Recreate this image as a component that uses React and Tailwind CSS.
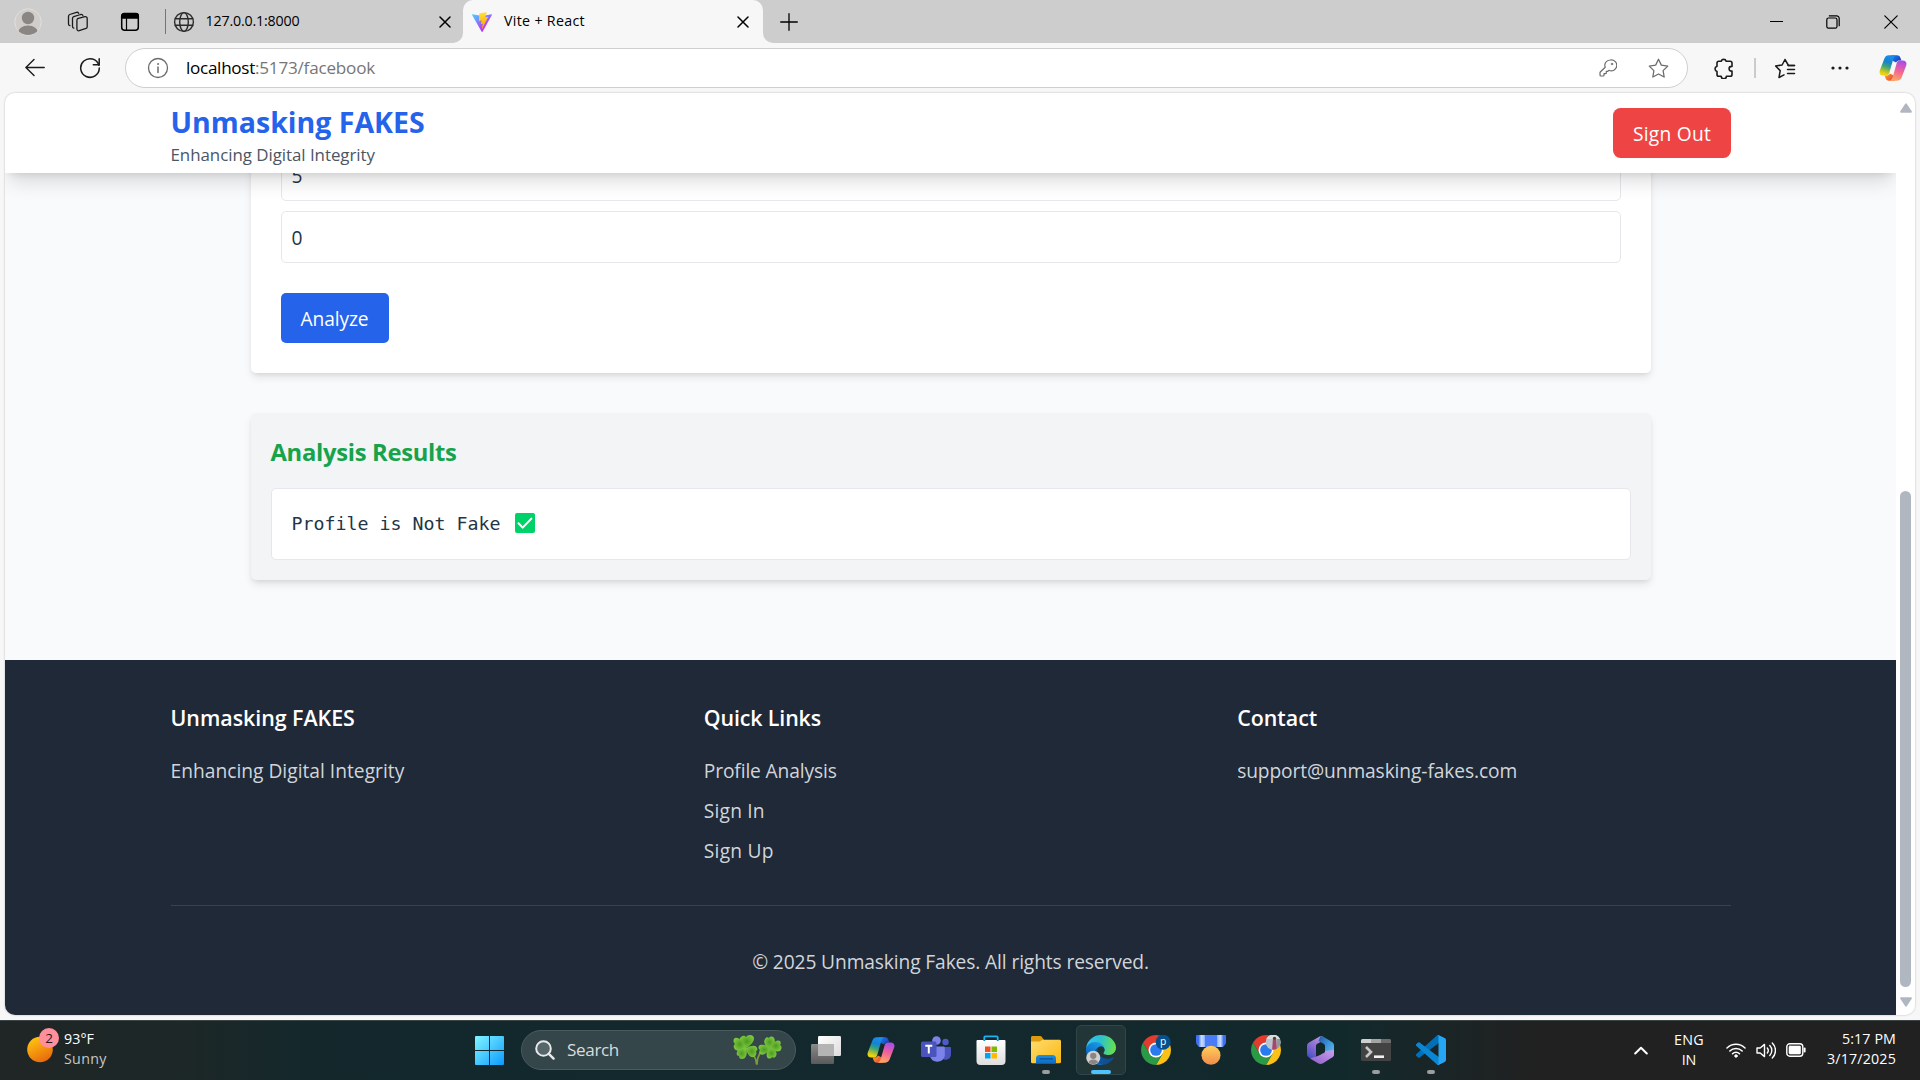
import React from "react";

function Icon({ size = 20, w, h, box = "0 0 20 20", sw = 1.2, className = "", children }) {
  return (
    <svg
      width={w || size}
      height={h || size}
      viewBox={box}
      fill="none"
      stroke="currentColor"
      strokeWidth={sw}
      strokeLinecap="round"
      strokeLinejoin="round"
      className={"block shrink-0 " + className}
    >
      {children}
    </svg>
  );
}

/* ---------- browser icons ---------- */

const ViteLogo = () => (
  <svg width="20" height="20" viewBox="0 0 256 257" className="block shrink-0">
    <defs>
      <linearGradient id="viteA" x1="-.8%" x2="57.6%" y1="7.7%" y2="78.4%">
        <stop offset="0%" stopColor="#41D1FF" />
        <stop offset="100%" stopColor="#BD34FE" />
      </linearGradient>
      <linearGradient id="viteB" x1="43.4%" x2="50.3%" y1="2.2%" y2="89%">
        <stop offset="0%" stopColor="#FFEA83" />
        <stop offset="8.3%" stopColor="#FFDD35" />
        <stop offset="100%" stopColor="#FFA800" />
      </linearGradient>
    </defs>
    <path fill="url(#viteA)" d="M255.153 37.938L134.897 252.976c-2.483 4.44-8.862 4.466-11.382.048L.875 37.958c-2.746-4.814 1.371-10.646 6.827-9.67l120.385 21.517a6.537 6.537 0 0 0 2.322-.004l117.867-21.483c5.438-.991 9.574 4.796 6.877 9.62Z" />
    <path fill="url(#viteB)" d="M185.432.063L96.44 17.501a3.268 3.268 0 0 0-2.634 3.014l-5.474 92.456a3.268 3.268 0 0 0 3.997 3.378l24.777-5.718c2.318-.535 4.413 1.507 3.936 3.838l-7.361 36.047c-.495 2.426 1.782 4.5 4.151 3.78l15.304-4.649c2.372-.72 4.652 1.36 4.15 3.788l-11.698 56.621c-.732 3.542 3.979 5.473 5.943 2.437l1.313-2.028l72.516-144.72c1.215-2.423-.88-5.186-3.54-4.672l-25.505 4.922c-2.396.462-4.435-1.77-3.759-4.114l16.646-57.705c.677-2.35-1.37-4.583-3.769-4.113Z" />
  </svg>
);

const Copilot = ({ id }) => (
  <svg width="28" height="26" viewBox="0 0 28 26" className="block shrink-0">
    <defs>
      <linearGradient id={id + "a"} x1="12" y1="0" x2="6" y2="19" gradientUnits="userSpaceOnUse">
        <stop offset="0" stopColor="#1B8FEF" />
        <stop offset=".38" stopColor="#1583D0" />
        <stop offset=".62" stopColor="#3CA477" />
        <stop offset="1" stopColor="#F2D30B" />
      </linearGradient>
      <linearGradient id={id + "b"} x1="22" y1="6" x2="15" y2="26" gradientUnits="userSpaceOnUse">
        <stop offset="0" stopColor="#A94DE8" />
        <stop offset=".45" stopColor="#F0609A" />
        <stop offset="1" stopColor="#FFAE5E" />
      </linearGradient>
      <linearGradient id={id + "c"} x1="14" y1="0" x2="21" y2="6" gradientUnits="userSpaceOnUse">
        <stop offset="0" stopColor="#1E7FE8" />
        <stop offset="1" stopColor="#1B3FC4" />
      </linearGradient>
      <linearGradient id={id + "d"} x1="6" y1="20" x2="13" y2="26" gradientUnits="userSpaceOnUse">
        <stop offset="0" stopColor="#F5A024" />
        <stop offset="1" stopColor="#F0453C" />
      </linearGradient>
    </defs>
    <path fill={`url(#${id}c)`} d="M12 .3h6c1.900 0 3 1 3.600 3l.8 2.200h-1.500c-1.900 0-3 .6-3.700 2L14 6z" />
    <path fill={`url(#${id}d)`} d="M16 25.700h-6c-1.900 0-3-1-3.600-3l-.8-2.200h1.500c1.900 0 3-.6 3.700-2L14 20z" />
    <path fill={`url(#${id}a)`} d="M17 .3H9.800C7.300.3 5.900 1.900 5 4.400L.9 15.200c-1.100 3.200.3 5.300 3.300 5.300h2.800c1.900 0 2.800-1.200 3.400-3.100L14 5c.7-2.300 1.200-3.700 3-4.700z" />
    <path fill={`url(#${id}b)`} d="M11 25.700h7.200c2.500 0 3.900-1.600 4.800-4.100l4.100-10.800c1.100-3.200-.3-5.300-3.300-5.300h-2.800c-1.900 0-2.800 1.200-3.400 3.100L14 21c-.7 2.300-1.200 3.700-3 4.700z" />
  </svg>
);

const CloseIcon = () => (
  <Icon size={12} box="0 0 12 12" sw={1.5}>
    <path d="M1 1l10 10M11 1L1 11" />
  </Icon>
);

function TabStrip() {
  return (
    <div className="flex h-[43px] bg-[#f7f7f7] text-black">
      <div className="flex w-[463px] items-center rounded-br-[10px] bg-[#cdcdcd] pl-3.5">
        <svg width="28" height="28" viewBox="0 0 28 28" className="block shrink-0">
          <clipPath id="avatarClip"><circle cx="14" cy="14" r="13" /></clipPath>
          <circle cx="14" cy="14" r="13.2" fill="#d0cdcb" stroke="#e0dfdb" strokeWidth="1" />
          <g fill="#8a8684" clipPath="url(#avatarClip)">
            <circle cx="14" cy="10" r="6.200" />
            <ellipse cx="14" cy="25.500" rx="10.300" ry="8" />
          </g>
        </svg>
        <Icon size={22} box="0 0 22 22" sw={1.3} className="ml-[25px] text-[#1b1b1b]">
          <path d="M10.500 7.700l7.400-2a1.800 1.800 0 0 1 2.300 1.700v8.300c0 .8-.4 1.400-1.200 1.700l-6.800 2.300a1.800 1.800 0 0 1-2.300-1.700V9.400c0-.8.200-1.400.6-1.700z" />
          <path d="M6.800 17.200c-.9-.2-1.300-.9-1.300-1.700V7.300c0-.8.400-1.400 1.200-1.700l7-2.100c1.100-.3 1.900.2 2.200 1.100" />
          <path d="M2.900 14.700c-.9-.2-1.400-.9-1.400-1.700V5.200c0-.8.400-1.400 1.200-1.700l6.800-2.100c1-.3 1.900.1 2.200 1" />
        </Icon>
        <Icon size={20} box="0 0 20 20" sw={1.5} className="ml-[31px]">
          <rect x="1.700" y="1.700" width="16.600" height="16.600" rx="3" />
          <path d="M1.700 5V4a2.500 2.500 0 0 1 2.500-2.500h11.600A2.500 2.500 0 0 1 18.300 4v2H1.700z" fill="currentColor" />
          <path d="M6.500 6.500v11.500" strokeWidth="1.200" />
        </Icon>
        <div className="ml-[24.500px] h-[25px] w-px bg-[#757575]" />
        <Icon size={22} box="0 0 22 22" sw={1.4} className="ml-[7px] text-[#2b2b2b]">
          <circle cx="11" cy="11" r="9.400" />
          <ellipse cx="11" cy="11" rx="4.300" ry="9.400" />
          <path d="M2.200 7.700h17.600M2.200 14.300h17.600" />
        </Icon>
        <span className="ml-[11px] w-[233px] pb-0.5 text-[14.250px] tracking-[-0.175px] whitespace-nowrap">127.0.0.1:8000</span>
        <CloseIcon />
      </div>
      <div className="w-[300px] bg-[#cdcdcd]">
        <div className="flex h-full items-center rounded-t-[10px] bg-[#f7f7f7] pl-[9px]">
          <ViteLogo />
          <span className="ml-3 w-[233px] pb-0.5 text-[14.250px] tracking-[0.300px] whitespace-nowrap">Vite + React</span>
          <CloseIcon />
        </div>
      </div>
      <div className="flex flex-1 items-center rounded-bl-[10px] bg-[#cdcdcd] pl-[17px]">
        <Icon size={18} box="0 0 18 18" sw={1.3}>
          <path d="M9 .7v16.600M.7 9h16.600" />
        </Icon>
        <div className="ml-auto flex items-center">
          <div className="h-px w-[13px] bg-black" />
          <Icon size={14} box="0 0 14 14" sw={1.2} className="ml-[43px]">
            <rect x=".8" y="3" width="10.200" height="10.200" rx="1.800" />
            <path d="M3.300.8h7.200a2.600 2.600 0 0 1 2.700 2.700v7.200" />
          </Icon>
          <Icon size={14} box="0 0 14 14" sw={1.200} className="mr-[22px] ml-[44px]">
            <path d="M.8.8l12.400 12.400M13.200.8L.8 13.200" />
          </Icon>
        </div>
      </div>
    </div>
  );
}

function Toolbar() {
  return (
    <div className="flex h-[50px] items-center bg-[#f7f7f7] text-[#1b1b1b]">
      <Icon size={20} sw={1.400} className="ml-[25px]">
        <path d="M9 1.500L.9 9.500 9 17.500M1.200 9.500h18" />
      </Icon>
      <Icon size={22} box="0 0 22 22" sw={1.500} className="ml-[34px]">
        <path d="M19.900 8.300A9.300 9.300 0 1 0 20.300 11" />
        <path d="M20.200 1.800v5.900h-5.900" />
      </Icon>
      <div className="ml-6 flex h-10 w-[1563px] items-center rounded-full border border-[#cfcfcf] bg-white pl-[21px]">
        <Icon size={22} box="0 0 22 22" sw={1.300} className="text-[#6b6b6b]">
          <circle cx="11" cy="11" r="9.500" />
          <path d="M11 10v5.500" strokeWidth="1.500" />
          <circle cx="11" cy="7" r=".6" fill="currentColor" strokeWidth=".7" />
        </Icon>
        <span className="ml-[17px] w-[1412.500px] text-[17.100px] leading-6 whitespace-nowrap text-black">
          <span className="tracking-[-0.290px]">localhost</span>
          <span className="tracking-[-0.208px] text-[#767676]">:5173/facebook</span>
        </span>
        <Icon size={18} box="0 0 18 18" sw={1.200} className="text-[#6b6b6b]">
          <path d="M11.200 1a5.300 5.300 0 0 0-5 7.200L1.300 13a1 1 0 0 0-.3.800V16c0 .6.400 1 1 1h2.200c.500 0 .8-.4.800-.8v-1.500h1.500c.5 0 .8-.3.800-.8v-1.500h1.500l1-1.100A5.500 5.500 0 1 0 11.200 1z" />
          <circle cx="13" cy="5" r=".9" fill="currentColor" strokeWidth=".4" />
        </Icon>
        <Icon size={21} box="0 0 20 20" sw={1.200} className="ml-[31px] text-[#6b6b6b]">
          <path d="M10 1.200l2.700 5.600 6.100.9-4.400 4.300 1 6.100L10 15.200l-5.400 2.900 1-6.100L1.200 7.700l6.100-.9z" />
        </Icon>
      </div>
      <Icon size={21} box="0 0 21 21" sw={1.600} className="ml-[26px]">
        <path d="M7.200 3.300a2.600 2.600 0 0 1 5 0h4a1.800 1.800 0 0 1 1.800 1.800v3.300h-.6a2.300 2.300 0 0 0 0 4.600h.6v3.500a1.800 1.800 0 0 1-1.800 1.800h-3.800a2.600 2.600 0 0 1-5.200 0H4.800A1.800 1.800 0 0 1 3 16.500v-3.100a2.700 2.700 0 0 1 0-5.200V5.100a1.800 1.800 0 0 1 1.800-1.800z" />
      </Icon>
      <div className="ml-[19px] h-5 w-[1.500px] bg-[#cbcbcb]" />
      <Icon w={22} h={21} box="0 0 22 21" sw={1.500} className="ml-[18px]">
        <path d="M20.500 7.500h-6L11 1.500 8.100 7 1.600 8l4.600 4.600L5 19.500l5-2.700" />
        <path d="M14 7.500h6.500M13.500 11.500h7M13.500 15.500h7" />
      </Icon>
      <svg width="18" height="4" viewBox="0 0 18 4" className="ml-[35px] block shrink-0" fill="currentColor">
        <circle cx="2" cy="2" r="1.600" /><circle cx="9" cy="2" r="1.600" /><circle cx="16" cy="2" r="1.600" />
      </svg>
      <div className="ml-[30px]"><Copilot id="cpTop" /></div>
    </div>
  );
}

/* ---------- web page ---------- */

function Header() {
  return (
    <header className="relative z-10 flex h-20 justify-center bg-white shadow-[0_12px_19px_-4px_rgba(0,0,0,0.14),0_5px_8px_-5px_rgba(0,0,0,0.12)]">
      <div className="flex w-[1560px] items-start justify-between">
        <div className="pt-[9px] whitespace-nowrap">
          <div className="text-[28.500px] leading-10 font-bold text-[#2563eb]">Unmasking FAKES</div>
          <div className="text-[16.900px] leading-[25px] tracking-[-0.040px] text-[#4b5563]">Enhancing Digital Integrity</div>
        </div>
        <div className="mt-[15px] flex h-[50px] w-[118px] items-center justify-center rounded-[7.500px] bg-[#ef4444] pt-0.5 pl-px text-[19.200px] tracking-[0.230px] text-white">Sign Out</div>
      </div>
    </header>
  );
}

function Field({ value }) {
  return (
    <div className="flex h-[52px] items-center rounded-[5px] border border-[#e5e7eb] bg-white pt-0.5 pl-2.5 text-[19.200px] leading-5 text-[#213547]">{value}</div>
  );
}

function Main() {
  return (
    <main className="flex flex-1 flex-col items-center overflow-hidden bg-[#f9fafc]">
      <section className="-mt-6 w-[1400px] shrink-0 rounded-[5px] bg-white px-[30px] pb-[30px] shadow-[0_5px_8px_-1px_rgba(0,0,0,0.1),0_2px_5px_-2px_rgba(0,0,0,0.1)]">
        <div className="flex flex-col gap-2.5">
          <Field value="5" />
          <Field value="0" />
        </div>
        <div className="mt-[30px] flex h-[50px] w-[108px] items-center justify-center rounded-[5px] bg-[#2563eb] pt-0.5 text-[19.200px] tracking-[-0.100px] text-white">Analyze</div>
      </section>
      <section className="mt-10 w-[1400px] shrink-0 rounded-[5px] bg-[#f3f4f6] px-5 pt-5 pb-5 shadow-[0_5px_8px_-1px_rgba(0,0,0,0.1),0_2px_5px_-2px_rgba(0,0,0,0.1)]">
        <h2 className="h-[55px] text-[23.750px] leading-[39px] font-bold tracking-[-0.289px] text-[#16a34a]">Analysis Results</h2>
        <div className="flex h-[72px] items-center rounded-[5px] border border-[#e5e7eb] bg-white pl-5">
          <span className="font-['DejaVu_Sans_Mono','Liberation_Mono',monospace] text-[18.270px] whitespace-pre text-[#213547]">Profile is Not Fake </span>
          <svg width="20" height="20" viewBox="0 0 20 20" className="mb-0.5 ml-[4px] block">
            <rect width="20" height="20" rx="2" fill="#00d26a" />
            <path d="M3.500 10.200l4.200 4.400 8.700-9" fill="none" stroke="#fff" strokeWidth="2" strokeLinecap="round" strokeLinejoin="round" />
          </svg>
        </div>
      </section>
    </main>
  );
}

function Footer() {
  const h = "text-[21.400px] leading-[35px] font-semibold text-white";
  return (
    <footer className="flex h-[355px] flex-col items-center bg-[#1f2937] pt-10 text-[19.200px] text-[#d1d5db]">
      <div className="grid h-[206px] w-[1560px] shrink-0 grid-cols-3 gap-10 border-b border-[#374151] whitespace-nowrap">
        <div>
          <div className={h + " tracking-[-0.036px]"}>Unmasking FAKES</div>
          <div className="mt-4 leading-10 tracking-[0.010px]">Enhancing Digital Integrity</div>
        </div>
        <div>
          <div className={h + " tracking-[-0.136px]"}>Quick Links</div>
          <div className="mt-4 leading-10 tracking-[-0.130px]">Profile Analysis</div>
          <div className="leading-10 tracking-[0.190px]">Sign In</div>
          <div className="leading-10 tracking-[0.240px]">Sign Up</div>
        </div>
        <div>
          <div className={h}>Contact</div>
          <div className="mt-4 leading-10 tracking-[-0.110px]">support@unmasking-fakes.com</div>
        </div>
      </div>
      <div className="mt-[41px] leading-[30px] tracking-[-0.120px]">© 2025 Unmasking Fakes. All rights reserved.</div>
    </footer>
  );
}

function Scrollbar() {
  return (
    <div className="flex w-[19px] flex-col items-center bg-white pt-2.5 pb-2">
      <svg width="12" height="10" viewBox="0 0 12 10"><path d="M6 1.200L11 8.800H1z" fill="#b1b7c0" stroke="#b1b7c0" strokeWidth="1.800" strokeLinejoin="round" /></svg>
      <div className="mt-[378px] h-[496px] w-[11px] rounded-full bg-[#b1b7c0]" />
      <svg width="12" height="10" viewBox="0 0 12 10" className="mt-2.5"><path d="M6 8.800L11 1.200H1z" fill="#b1b7c0" stroke="#b1b7c0" strokeWidth="1.800" strokeLinejoin="round" /></svg>
    </div>
  );
}

/* ---------- taskbar ---------- */

const Clover = () => (
  <svg width="50" height="32" viewBox="0 0 50 32" className="block shrink-0">
    <defs>
      <radialGradient id="leaf"><stop offset="0" stopColor="#4f9a1f" /><stop offset="1" stopColor="#79c63f" /></radialGradient>
    </defs>
    <path d="M15 15c5 3 9 8 9.500 15M34 14c-5 2-9 8-9 16" stroke="#7f9a35" strokeWidth="1.700" fill="none" strokeLinecap="round" />
    <g fill="url(#leaf)">
      <path d="M14 14C8 12 6 5 9 3c2-2 4-1 5 0 1-2 5-3 7-1 3 3-1 9-7 12z" />
      <path d="M14 14C8 18 3 17 2 14c-1-2 0-3 1-4-2-2-2-5 0-6 4-1 9 4 11 10z" />
      <path d="M14 14c6-3 10-3 11 0 1 2 0 3-1 3 1 2 0 5-2 6-4 1-7-3-8-9z" />
      <path d="M14 14c2 6 0 11-4 11-2 0-3-1-3-3-2 0-3-2-2-4 1-3 5-4 9-4z" />
      <path d="M38 14c-5-1-7-6-5-9 1-2 3-2 4-1 1-2 4-2 5 0 2 3 0 8-4 10z" />
      <path d="M38 14c3-6 7-9 10-7 1 1 1 3 0 4 2 1 2 4 0 6-3 1-7 0-10-3z" />
      <path d="M38 14c5 1 8 5 6 8-1 2-3 2-4 1-1 2-4 2-5 0-1-3 0-7 3-9z" />
      <path d="M38 14c-2 5-7 8-10 6-1-1-1-3 0-4-2-1-2-4 0-5 3-1 7 0 10 3z" />
    </g>
  </svg>
);

const StartIcon = () => (
  <svg width="29" height="29" viewBox="0 0 29 29">
    <defs><linearGradient id="win" x1="0" y1="0" x2="1" y2="1"><stop offset="0" stopColor="#80f4ff" /><stop offset=".5" stopColor="#48c8ff" /><stop offset="1" stopColor="#0a9aff" /></linearGradient></defs>
    <path fill="url(#win)" d="M1 0h13v14H0V1a1 1 0 0 1 1-1zM15 0h13a1 1 0 0 1 1 1v13H15zM0 15h14v14H1a1 1 0 0 1-1-1zM15 15h14v13a1 1 0 0 1-1 1H15z" />
  </svg>
);

const TaskView = () => (
  <svg width="30" height="28" viewBox="0 0 30 28">
    <defs>
      <linearGradient id="tv1" x1="0" y1="0" x2="1" y2="1"><stop offset="0" stopColor="#fff" /><stop offset="1" stopColor="#dcdcdc" /></linearGradient>
      <linearGradient id="tv2" x1="0" y1="0" x2="0" y2="1"><stop offset="0" stopColor="#8a8a8a" /><stop offset="1" stopColor="#5a5a5a" /></linearGradient>
    </defs>
    <rect x="0" y="8" width="23" height="20" rx="1.200" fill="url(#tv2)" />
    <rect x="7" y="0" width="23" height="20" rx="1.200" fill="url(#tv1)" />
    <rect x="7" y="8" width="16" height="12" fill="#b4b4b4" />
  </svg>
);

const Teams = () => (
  <svg width="30" height="28" viewBox="0 0 30 28">
    <circle cx="24.500" cy="6" r="3.200" fill="#5059c9" />
    <path d="M19 11h10c.6 0 1 .4 1 1v6.500a5.500 5.500 0 0 1-9 4z" fill="#4b53bc" />
    <circle cx="15.500" cy="4.500" r="4.300" fill="#7b83eb" />
    <path d="M10 10.500h12.500c.7 0 1.300.6 1.300 1.200V20a7.800 7.800 0 0 1-15 0z" fill="#7b83eb" />
    <rect x="0" y="5.500" width="15.500" height="15.500" rx="1.500" fill="#4b53bc" />
    <path d="M4.300 9.700h7M7.800 9.700v7.800" stroke="#fff" strokeWidth="2" />
  </svg>
);

const Store = () => (
  <svg width="30" height="30" viewBox="0 0 30 30">
    <defs><linearGradient id="st" x1="0" y1="0" x2="0" y2="1"><stop offset="0" stopColor="#fff" /><stop offset="1" stopColor="#dedede" /></linearGradient></defs>
    <path d="M8.300 6V2.300a1 1 0 0 1 1-1h11.400a1 1 0 0 1 1 1V6" fill="none" stroke="#1bb4f0" strokeWidth="1.800" />
    <path d="M1.500 5h27a1 1 0 0 1 1 1v20a4 4 0 0 1-4 4h-21a4 4 0 0 1-4-4V6a1 1 0 0 1 1-1z" fill="url(#st)" />
    <path d="M8.300 5v1M21.700 5v1" stroke="#1583c4" strokeWidth="1.800" />
    <path d="M9 11.500h5.500V17H9z" fill="#f25022" /><path d="M15.500 11.500H21V17h-5.500z" fill="#7fba00" />
    <path d="M9 18h5.500v5.500H9z" fill="#00a4ef" /><path d="M15.500 18H21v5.500h-5.500z" fill="#ffb900" />
  </svg>
);

const Explorer = () => (
  <svg width="30" height="28" viewBox="0 0 30 28">
    <defs>
      <linearGradient id="fo" x1="0" y1="0" x2="1" y2="1"><stop offset="0" stopColor="#ffdc6e" /><stop offset="1" stopColor="#f9b812" /></linearGradient>
      <linearGradient id="fb" x1="0" y1="0" x2="0" y2="1"><stop offset="0" stopColor="#1d8fe0" /><stop offset="1" stopColor="#0f6cc4" /></linearGradient>
    </defs>
    <path d="M0 1.500C0 .7.600 0 1.500 0h7.800c.5 0 .9.200 1.200.5L13 4v5H0z" fill="#dd9a0c" />
    <path d="M0 5.500h8.500c.5 0 .9-.1 1.200-.4l1.300-1c.3-.3.700-.4 1-.4h16.500c.8 0 1.500.7 1.500 1.500V26c0 .8-.7 1.200-1.500 1.200h-27A1.400 1.400 0 0 1 0 26z" fill="url(#fo)" />
    <path d="M5 27.200v-4.700a3.500 3.500 0 0 1 3.500-3.500h13a3.500 3.500 0 0 1 3.500 3.500v4.700z" fill="url(#fb)" />
    <path d="M9 22.800h12.500" stroke="#0b4f96" strokeWidth="1.300" strokeLinecap="round" />
  </svg>
);

const Edge = () => (
  <svg width="30" height="30" viewBox="0 0 256 256">
    <defs>
      <linearGradient id="e1" x1="60" y1="177" x2="236" y2="177" gradientUnits="userSpaceOnUse"><stop offset="0" stopColor="#0c59a4" /><stop offset="1" stopColor="#114a8b" /></linearGradient>
      <linearGradient id="e2" x1="150" y1="90" x2="46" y2="220" gradientUnits="userSpaceOnUse"><stop offset="0" stopColor="#1b9de2" /><stop offset=".4" stopColor="#1383d8" /><stop offset="1" stopColor="#0667c4" /></linearGradient>
      <linearGradient id="e3" x1="10" y1="70" x2="245" y2="110" gradientUnits="userSpaceOnUse"><stop offset="0" stopColor="#35c1f1" /><stop offset=".45" stopColor="#2cc0d0" /><stop offset="1" stopColor="#66e04d" /></linearGradient>
    </defs>
    <path fill="url(#e1)" d="M231 190.500c-3.400 1.800-6.900 3.400-10.500 4.700a101.500 101.500 0 0 1-35.900 6.500c-47.300 0-88.500-32.500-88.500-74.300 0-11.700 6.500-22.100 16.400-27.600-42.800 1.800-53.800 46.400-53.800 72.500 0 74 68.100 81.400 82.800 81.400 7.900 0 19.800-2.300 27-4.600l1.300-.4a128.300 128.300 0 0 0 66.600-52.800 4 4 0 0 0-5.400-5.400z" />
    <path fill="url(#e2)" d="M105.700 241.400a79.200 79.200 0 0 1-22.700-21.300 80.700 80.700 0 0 1 29.500-120.300c3.200-1.500 8.500-4.100 15.600-4a32.400 32.400 0 0 1 25.700 13 31.900 31.900 0 0 1 6.300 18.700c0-.2 24.500-79.600-80-79.600-43.900 0-80 41.700-80 78.200a130.200 130.200 0 0 0 12.100 56 128 128 0 0 0 156.400 67 75.500 75.500 0 0 1-62.800-8z" />
    <path fill="url(#e3)" d="M152.300 148.900c-.8 1-3.300 2.500-3.300 5.700 0 2.600 1.700 5.100 4.700 7.200 14.400 10 41.500 8.700 41.600 8.700a59.600 59.600 0 0 0 30.300-8.300 61.400 61.400 0 0 0 30.400-52.900c.3-22.400-8-37.300-11.300-43.900C223.500 23.900 177.700 0 128 0A128 128 0 0 0 0 126.200c.5-36.500 36.800-66 80-66 3.500 0 23.500.3 42 10.100 16.300 8.600 24.900 18.900 30.800 29.200 6.200 10.700 7.300 24.100 7.300 29.500 0 5.300-2.700 13.300-7.800 19.900z" />
    <clipPath id="ep"><circle cx="62" cy="194" r="56" /></clipPath>
    <circle cx="62" cy="194" r="60" fill="#d2d0ce" />
    <g fill="#8a8684" clipPath="url(#ep)"><circle cx="62" cy="178" r="27" /><ellipse cx="62" cy="246" rx="44" ry="36" /></g>
  </svg>
);

const Chrome = ({ children }) => (
  <svg width="30" height="30" viewBox="2 2 44 44">
    <path fill="#e33b2e" d="M24 13h19.050A22 22 0 0 0 4.950 13l9.520 16.500z" />
    <path fill="#fbc116" d="M24 13h19.050A22 22 0 0 1 24 46l9.530-16.500z" />
    <path fill="#2b9a46" d="M33.530 29.500L24 46A22 22 0 0 1 4.950 13l9.520 16.500z" />
    <circle cx="24" cy="24" r="11" fill="#fff" />
    <circle cx="24" cy="24" r="8.600" fill="#2b7bee" />
    {children}
  </svg>
);

const Medal = () => (
  <svg width="30" height="30" viewBox="0 0 30 30">
    <defs>
      <linearGradient id="md" x1="0" y1="0" x2="0" y2="1"><stop offset="0" stopColor="#ffd15a" /><stop offset="1" stopColor="#f08a4b" /></linearGradient>
      <linearGradient id="rb" x1="0" y1="0" x2="1" y2="0"><stop offset="0" stopColor="#3f6ff0" /><stop offset=".08" stopColor="#3f6ff0" /><stop offset=".18" stopColor="#c4dcff" /><stop offset=".28" stopColor="#9fc0ff" /><stop offset=".3" stopColor="#4a7cf8" /><stop offset=".7" stopColor="#4a7cf8" /><stop offset=".72" stopColor="#9fc0ff" /><stop offset=".82" stopColor="#c4dcff" /><stop offset=".92" stopColor="#3f6ff0" /></linearGradient>
    </defs>
    <path d="M1 0h28c.6 0 1 .5 1 1v6c0 1-.3 2-1 2.800L27 12H3L1 9.800C.3 9 0 8 0 7V1c0-.5.400-1 1-1z" fill="url(#rb)" />
    <circle cx="15" cy="20.300" r="9.500" fill="url(#md)" />
  </svg>
);

const M365 = () => (
  <svg width="27" height="28" viewBox="0 0 27 28">
    <defs>
      <linearGradient id="m1" x1=".2" y1="1" x2=".7" y2="0"><stop offset="0" stopColor="#3c4fc4" /><stop offset=".4" stopColor="#7a63cf" /><stop offset="1" stopColor="#b990e0" /></linearGradient>
      <linearGradient id="m2" x1="0" y1="0" x2="1" y2="1"><stop offset="0" stopColor="#24549c" /><stop offset=".45" stopColor="#3a8fd8" /><stop offset="1" stopColor="#62c8f2" /></linearGradient>
      <linearGradient id="m3" x1="0" y1="1" x2="1" y2="0"><stop offset="0" stopColor="#8d5bc8" /><stop offset="1" stopColor="#c9a0ee" /></linearGradient>
    </defs>
    <path d="M13.500 0L2 6.500C.7 7.300 0 8.500 0 10v8c0 1.500.7 2.700 2 3.500l3.500 2L9 20.500V10c0-1 .5-1.700 1.300-2.200L15.500 5V0z" fill="url(#m1)" />
    <path d="M13.500 0c1 0 1.700.2 2.500.6l9 5.400c1.300.8 2 2 2 3.500V18c0 1.500-.7 2.700-2 3.500l-7-4.500v-7c0-1-.5-1.700-1.300-2.200L11.500 5z" fill="url(#m2)" />
    <path d="M25 21.500l-9 5.700c-1.600 1-3.400 1-5 0l-8-4.700 7-2.200c1 0 6.300-3 6.800-3.200.8-.500 1.200-1.100 1.200-2.100l9-1V18c0 1.500-.7 2.700-2 3.500z" fill="url(#m3)" />
  </svg>
);

const Terminal = () => (
  <svg width="30" height="22" viewBox="0 0 30 22">
    <rect width="30" height="22" rx="1.500" fill="#434343" />
    <path d="M1.500 0H10v4H0V1.500A1.500 1.500 0 0 1 1.500 0z" fill="#cfcfcf" />
    <path d="M10 0h10v4H10z" fill="#a5a5a5" /><path d="M20 0h8.500A1.500 1.500 0 0 1 30 1.500V4H20z" fill="#6e6e6e" />
    <path d="M5 8l5 5-5 5" fill="none" stroke="#c8c8c8" strokeWidth="2.600" />
    <path d="M13 17.700h10" stroke="#f2f2f2" strokeWidth="2.600" />
  </svg>
);

const VSCode = () => (
  <svg width="30" height="30" viewBox="0 0 100 100">
    <path fill="#0070b8" d="M96.500 10.800L75.900.9a6.200 6.200 0 0 0-7.100 1.200L1.300 63.600a4.200 4.200 0 0 0 0 6.100l5.500 5a4.200 4.200 0 0 0 5.300.3l81.200-61.600c2.700-2.100 6.700-.1 6.700 3.300v-.2a6.300 6.300 0 0 0-3.500-5.700z" />
    <path fill="#0a86d4" d="M96.500 89.200L75.900 99.100a6.200 6.200 0 0 1-7.100-1.200L1.300 36.400a4.200 4.200 0 0 1 0-6.100l5.500-5a4.200 4.200 0 0 1 5.300-.3l81.200 61.600c2.700 2.100 6.700.1 6.700-3.300v.2a6.300 6.300 0 0 1-3.500 5.700z" />
    <path fill="#26a5f2" d="M75.900 99.100a6.200 6.200 0 0 1-7.100-1.200c2.300 2.300 6.200.7 6.200-2.600V4.700c0-3.300-3.900-4.900-6.200-2.600a6.200 6.200 0 0 1 7.100-1.200l20.600 9.900A6.300 6.300 0 0 1 100 16.500v67a6.300 6.300 0 0 1-3.500 5.700z" />
  </svg>
);

function TaskButton({ children, running, active }) {
  return (
    <div className="flex w-[55px] shrink-0 justify-center">
      <div className={"relative flex h-[50px] w-[50px] items-center justify-center rounded-[5px] " + (active ? "border border-[#30474a] bg-[#223638]" : "")}>
        {children}
        {running && <div className="absolute bottom-[1px] h-[4px] w-2 rounded-full bg-[#9a9e9e]" />}
        {active && <div className="absolute bottom-0 h-[4px] w-5 rounded-full bg-[#4cc2ff]" />}
      </div>
    </div>
  );
}

function Taskbar() {
  return (
    <div className="flex h-[60px] items-center border-t border-[#3b4545] bg-[linear-gradient(90deg,#202625_0%,#1c2727_10%,#14282c_16%,#12292c_70%,#1d2324_77%,#212121_80%)] pb-px text-[14.250px] leading-5 text-white">
      <div className="relative ml-[27px] h-9 w-8 shrink-0">
        <svg width="32" height="36" viewBox="0 0 32 36" className="block">
          <defs><linearGradient id="sun" x1=".2" y1="0" x2=".7" y2="1"><stop offset="0" stopColor="#ffc811" /><stop offset="1" stopColor="#e8660c" /></linearGradient></defs>
          <circle cx="13" cy="17.500" r="12.800" fill="url(#sun)" />
        </svg>
        <div className="absolute -top-1 left-3 flex h-5 w-5 items-center justify-center rounded-full bg-[#ff8f9b] text-[13.500px] text-[#2a1416]">2</div>
      </div>
      <div className="ml-[5px] w-[398px] pb-0.5 whitespace-nowrap">
        <div className="tracking-[0.060px]">93°F</div>
        <div className="tracking-[0.300px] text-[#c4c8c8]">Sunny</div>
      </div>
      <div className="flex w-[55px] shrink-0 justify-center pt-px"><StartIcon /></div>
      <div className="ml-1 flex h-10 w-[275px] shrink-0 items-center rounded-full border border-[#4a5b5e] bg-[#34464a] pr-[13px] pl-[13px]">
        <Icon size={20} sw={2} className="text-[#e6eaea]">
          <circle cx="8.500" cy="8.500" r="7.300" fill="#56666a" />
          <path d="M13.800 13.800L18.600 18.600" strokeWidth="2.400" />
        </Icon>
        <span className="ml-[12px] flex-1 text-[17.100px] tracking-[-0.357px] text-[#d8dcdd]">Search</span>
        <Clover />
      </div>
      <div className="ml-[2px] flex">
        <TaskButton><TaskView /></TaskButton>
        <TaskButton><Copilot id="cpBar" /></TaskButton>
        <TaskButton><Teams /></TaskButton>
        <TaskButton><Store /></TaskButton>
        <TaskButton running><Explorer /></TaskButton>
        <TaskButton active><Edge /></TaskButton>
        <TaskButton>
          <Chrome>
            <circle cx="34.500" cy="12.500" r="11" fill="#05508c" />
            <text x="34.500" y="17" textAnchor="middle" fontSize="15" fill="#fff" fontFamily="Open Sans, sans-serif">p</text>
          </Chrome>
        </TaskButton>
        <TaskButton><Medal /></TaskButton>
        <TaskButton>
          <Chrome>
            <clipPath id="photoClip"><circle cx="34.500" cy="12.500" r="11" /></clipPath>
            <g clipPath="url(#photoClip)">
              <path fill="#b9c6cc" d="M23 1h23v23H23z" />
              <path fill="#d8dedd" d="M23 1h23v7H23z" />
              <path fill="#8d9a96" d="M40 8h6v16h-6z" />
              <path fill="#a8456e" d="M34 9h5l1 15h-7z" />
              <circle cx="36.500" cy="7" r="2.500" fill="#5a3a34" />
            </g>
          </Chrome>
        </TaskButton>
        <TaskButton><M365 /></TaskButton>
        <TaskButton running><Terminal /></TaskButton>
        <TaskButton running><VSCode /></TaskButton>
      </div>
      <div className="ml-auto flex items-center">
        <Icon w={14} h={9} box="0 0 14 9" sw={2}>
          <path d="M1.200 7.500L7 1.700l5.800 5.800" />
        </Icon>
        <div className="ml-[25px] w-8 text-center">
          <div className="tracking-[0.330px]">ENG</div>
          <div>IN</div>
        </div>
        <Icon w={20} h={15} box="0 0 20 15" sw={1.500} className="ml-[21px]">
          <path d="M1 5a12.800 12.800 0 0 1 18 0" />
          <path d="M3.800 8a8.800 8.800 0 0 1 12.400 0" />
          <path d="M6.500 10.800a5 5 0 0 1 7 0" />
          <circle cx="10" cy="13" r="1.300" fill="currentColor" strokeWidth=".8" />
        </Icon>
        <Icon w={20} h={17} box="0 0 20 17" sw={1.400} className="ml-2.5">
          <path d="M1 6v5h3.200l4.300 3.600V2.400L4.200 6z" />
          <path d="M11.300 6a4 4 0 0 1 0 5M13.800 3.500a7.200 7.200 0 0 1 0 10M16.300 1a10.500 10.500 0 0 1 0 15" />
        </Icon>
        <Icon w={20} h={14} box="0 0 20 14" sw={1.400} className="ml-2.5">
          <rect x=".8" y=".8" width="16" height="12.400" rx="3" />
          <rect x="3" y="3" width="11.600" height="8" rx="1" fill="currentColor" strokeWidth=".6" />
          <path d="M18.600 5.500v3" strokeWidth="2" />
        </Icon>
        <div className="mr-6 ml-[21px] pb-0.5 text-right whitespace-nowrap">
          <div className="tracking-[0.100px]">5:17 PM</div>
          <div className="tracking-[0.167px]">3/17/2025</div>
        </div>
      </div>
    </div>
  );
}

export default function App() {
  return (
    <div className="flex h-[1080px] w-[1920px] flex-col overflow-hidden bg-[#f7f7f7] font-['Open_Sans','Noto_Sans',sans-serif]">
      <TabStrip />
      <Toolbar />
      <div className="mx-[5px] mb-[5px] flex h-[922px] overflow-hidden rounded-[10px] shadow-[0_0_2px_rgba(0,0,0,0.3)]">
        <div className="flex w-[1891px] flex-col overflow-hidden">
          <Header />
          <Main />
          <Footer />
        </div>
        <Scrollbar />
      </div>
      <Taskbar />
    </div>
  );
}
